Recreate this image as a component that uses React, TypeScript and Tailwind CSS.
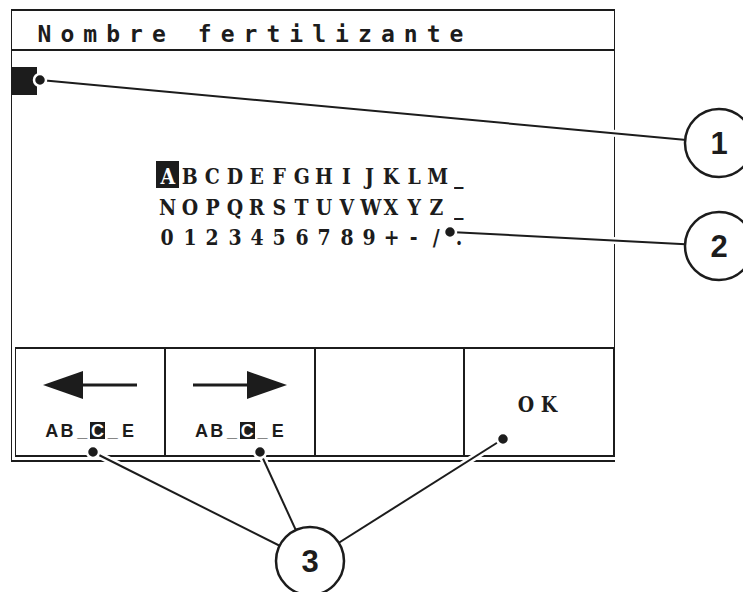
import React from "react";

const INK = "#1c1c1c";

const rows = ["ABCDEFGHIJKLM_", "NOPQRSTUVWXYZ_", "0123456789+-/."];

function Cell({ ch, active }: { ch: string; active?: boolean }) {
  return (
    <div
      className={
        active
          ? "w-[22.4px] h-[27px] leading-[30px] text-center bg-[#1c1c1c] text-white"
          : "w-[22.4px] h-[30.5px] leading-[30px] text-center"
      }
    >
      <span className="inline-block scale-x-[0.82]">{ch}</span>
    </div>
  );
}

function ArrowLeft() {
  return (
    <svg width="94" height="30" viewBox="0 0 94 30">
      <polygon points="0,14 40,0 40,28" fill={INK} />
      <rect x="38" y="12.5" width="56" height="3" fill={INK} />
    </svg>
  );
}

function ArrowRight() {
  return (
    <svg width="94" height="30" viewBox="0 0 94 30">
      <rect x="0" y="12.5" width="56" height="3" fill={INK} />
      <polygon points="94,14 54,0 54,28" fill={INK} />
    </svg>
  );
}

function CursorLabel() {
  const chars = ["A", "B", "_", "C", "_", "E"];
  return (
    <div className="mt-[21px] flex font-['Liberation_Sans',sans-serif] font-bold text-[18px] leading-[18px]">
      {chars.map((c, i) => (
        <div
          key={i}
          className={
            i === 3
              ? "w-[15.3px] h-[17px] text-center bg-[#1c1c1c] text-white"
              : "w-[15.3px] h-[18px] text-center"
          }
        >
          {c}
        </div>
      ))}
    </div>
  );
}

function Callout({ cx, cy, n }: { cx: number; cy: number; n: string }) {
  return (
    <g>
      <circle cx={cx} cy={cy} r="34" fill="white" stroke={INK} strokeWidth="2.5" />
      <text
        x={cx}
        y={cy + 11}
        textAnchor="middle"
        fontFamily="Liberation Sans, Arial, sans-serif"
        fontWeight="bold"
        fontSize="31"
        fill={INK}
      >
        {n}
      </text>
    </g>
  );
}

function Leader({ x1, y1, x2, y2 }: { x1: number; y1: number; x2: number; y2: number }) {
  return (
    <g>
      <line x1={x1} y1={y1} x2={x2} y2={y2} stroke="white" strokeWidth="7" />
      <line x1={x1} y1={y1} x2={x2} y2={y2} stroke={INK} strokeWidth="2" />
    </g>
  );
}

function Dot({ x, y }: { x: number; y: number }) {
  return <circle cx={x} cy={y} r="6" fill={INK} stroke="white" strokeWidth="2.5" />;
}

export default function App() {
  return (
    <div className="relative w-[743px] h-[592px] overflow-hidden bg-white pt-[9px] pl-[11px] text-[#1c1c1c]">
      <div className="w-[604px] flex flex-col">
        {/* Screen */}
        <div className="h-[338px] border-t-2 border-x border-[#1c1c1c] flex flex-col">
          <div className="h-[40px] border-b-2 border-[#1c1c1c] pl-[21px] pt-[12px] flex font-['DejaVu_Sans_Mono',monospace] font-bold text-[23px] leading-[23px]">
            {"Nombre fertilizante".split("").map((c, i) => (
              <div key={i} className="w-[22.9px] text-center">
                {c === " " ? "\u00a0" : c}
              </div>
            ))}
          </div>

          <div className="flex-1 flex flex-col">
            <div className="mt-[16px] w-[25px] h-[28px] bg-[#1c1c1c]" />
            <div className="mt-[66px] flex flex-col items-center font-['DejaVu_Serif',serif] font-bold text-[23px]">
              {rows.map((r, ri) => (
                <div key={ri} className="flex h-[30.5px]">
                  {r.split("").map((c, ci) => (
                    <Cell key={ci} ch={c} active={ri === 0 && ci === 0} />
                  ))}
                </div>
              ))}
            </div>
          </div>
        </div>

        {/* Soft keys */}
        <div className="border-l border-b-2 border-[#1c1c1c] pl-[3px] pb-[3px]">
          <div className="h-[110px] grid grid-cols-4 border-t-2 border-l border-b-2 border-[#1c1c1c]">
            <div className="border-r-2 border-[#1c1c1c] flex flex-col items-center pt-[22px]">
              <ArrowLeft />
              <CursorLabel />
            </div>
            <div className="border-r-2 border-[#1c1c1c] flex flex-col items-center pt-[22px]">
              <ArrowRight />
              <CursorLabel />
            </div>
            <div className="border-r-2 border-[#1c1c1c]" />
            <div className="border-r-2 border-[#1c1c1c] flex items-center justify-center pt-[5px] pr-[4px] font-['DejaVu_Serif',serif] font-bold text-[23px]">
              <div className="w-[23px] text-center">
                <span className="inline-block scale-x-[0.82]">O</span>
              </div>
              <div className="w-[23px] text-center">
                <span className="inline-block scale-x-[0.82]">K</span>
              </div>
            </div>
          </div>
        </div>
      </div>

      {/* Callouts */}
      <svg className="absolute left-0 top-0 pointer-events-none" width="743" height="592" viewBox="0 0 743 592">
        <Leader x1={40} y1={80} x2={719} y2={143} />
        <Leader x1={450} y1={232} x2={719} y2={246} />
        <Leader x1={93} y1={452} x2={310} y2={561} />
        <Leader x1={260} y1={452} x2={310} y2={561} />
        <Leader x1={503} y1={439} x2={310} y2={561} />
        <Dot x={40} y={80} />
        <Dot x={450} y={232} />
        <Dot x={93} y={452} />
        <Dot x={260} y={452} />
        <Dot x={503} y={439} />
        <Callout cx={719} cy={143} n="1" />
        <Callout cx={719} cy={246} n="2" />
        <Callout cx={310} cy={561} n="3" />
      </svg>
    </div>
  );
}
